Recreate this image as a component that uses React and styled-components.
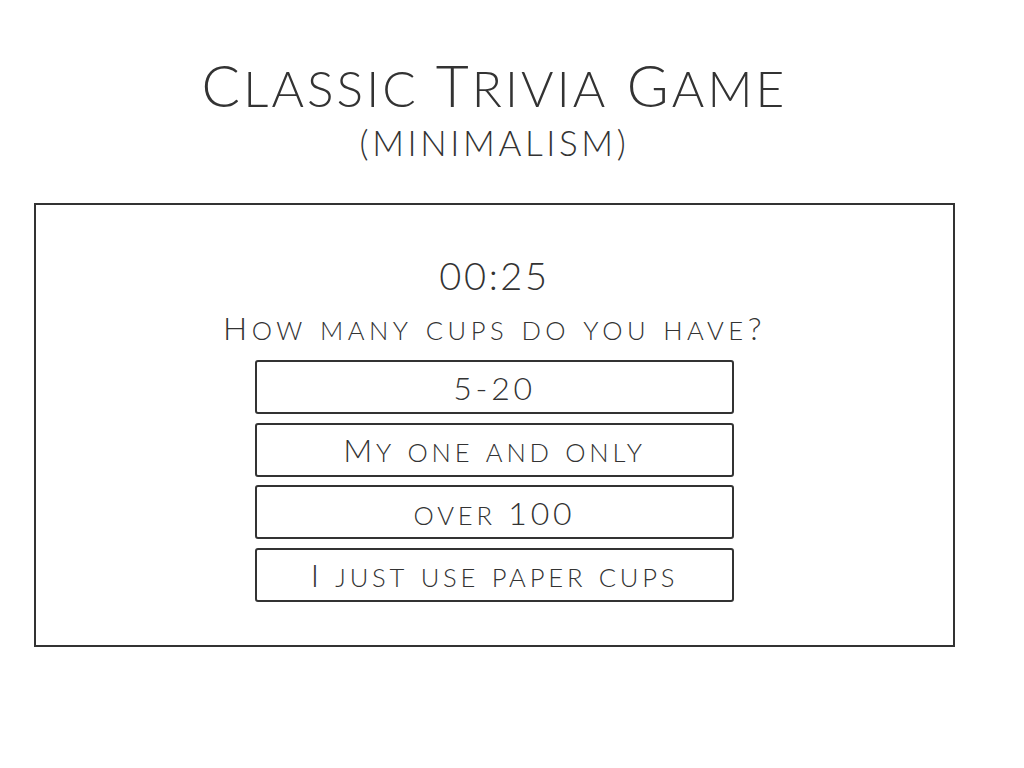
import React from "react";
import styled, { createGlobalStyle } from "styled-components";

const Global = createGlobalStyle`
  html, body { margin: 0; padding: 0; background: #fff; }
  body { font-family: Lato, "Open Sans", sans-serif; color: #333; }
`;

const Page = styled.main`
  width: 921px;
  margin: 0 0 0 34px;
  padding-top: 52px;
  display: flex;
  flex-direction: column;
  align-items: center;
`;

const Low = styled.span`
  font-size: ${(p) => p.$ratio || 0.8}em;
  text-transform: uppercase;
`;

function Caps({ text, ratio }) {
  const parts = text.match(/[a-z]+|[^a-z]+/g) || [];
  return parts.map((p, i) =>
    /[a-z]/.test(p) ? (
      <Low key={i} $ratio={ratio}>
        {p}
      </Low>
    ) : (
      <React.Fragment key={i}>{p}</React.Fragment>
    )
  );
}

const Title = styled.h1`
  margin: 0;
  font-weight: 300;
  font-size: 57px;
  line-height: 66px;
  letter-spacing: 3.1px;
  text-align: center;
`;

const Subtitle = styled.h2`
  margin: 0;
  font-weight: 300;
  font-size: 35px;
  line-height: 42px;
  text-transform: uppercase;
  letter-spacing: 3.6px;
  text-align: center;
`;

const Card = styled.section`
  box-sizing: border-box;
  width: 100%;
  margin-top: 40px;
  height: 444px;
  border: 2px solid #333;
  display: flex;
  flex-direction: column;
  align-items: center;
  padding-top: 46px;
`;

const Timer = styled.div`
  font-weight: 300;
  font-size: 38px;
  line-height: 48px;
  letter-spacing: 2.6px;
`;

const Question = styled.div`
  margin-top: 9px;
  font-weight: 300;
  font-size: 32px;
  line-height: 40px;
  letter-spacing: 4.5px;
`;

const Answers = styled.div`
  margin-top: 10px;
  display: flex;
  flex-direction: column;
  gap: 8.5px;
  width: 479px;
`;

const Answer = styled.button`
  box-sizing: border-box;
  height: 54px;
  width: 100%;
  background: #fff;
  border: 2px solid #333;
  border-radius: 3px;
  font-family: inherit;
  color: #333;
  font-weight: 300;
  font-size: 32px;
  letter-spacing: 3.8px;
  padding: 0;
  cursor: pointer;
`;

const answers = ["5-20", "My one and only", "over 100", "I just use paper cups"];

export default function App() {
  return (
    <>
      <Global />
      <Page>
        <Title>
          <Caps text="Classic Trivia Game" ratio={0.87} />
        </Title>
        <Subtitle>(minimalism)</Subtitle>
        <Card>
          <Timer>00:25</Timer>
          <Question>
            <Caps text="How many cups do you have?" />
          </Question>
          <Answers>
            {answers.map((a) => (
              <Answer key={a}>
                <Caps text={a} />
              </Answer>
            ))}
          </Answers>
        </Card>
      </Page>
    </>
  );
}
